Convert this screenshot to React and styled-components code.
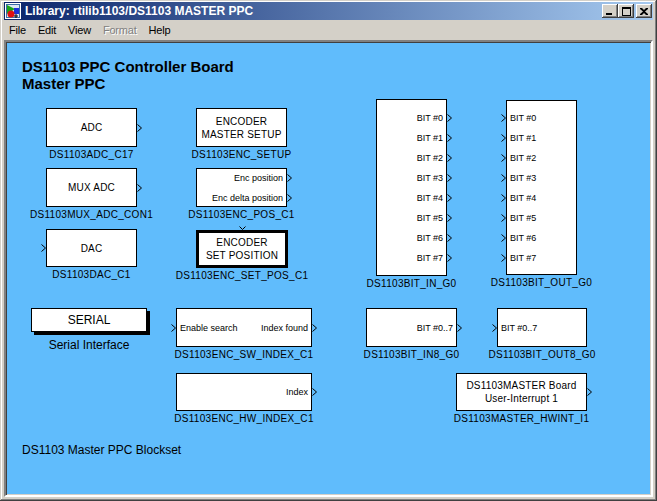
import React from 'react';
import styled, { createGlobalStyle } from 'styled-components';

const GlobalStyle = createGlobalStyle`
  html, body {
    margin: 0;
    padding: 0;
    background: #d4d0c8;
  }
  * {
    box-sizing: border-box;
  }
`;

// page coords of the canvas content origin
const ORIGIN_X = 6;
const ORIGIN_Y = 42;

const bitRows = (side) =>
  Array.from({ length: 8 }, (_, i) =>
    side === 'out'
      ? { right: `BIT #${i}`, out: true }
      : { left: `BIT #${i}`, in: true }
  );

const blocks = [
  { id: 'adc', x: 46, y: 108, w: 91, h: 39, label: 'DS1103ADC_C17', rows: [{ caption: ['ADC'], out: true }] },
  { id: 'mux', x: 46, y: 168, w: 91, h: 39, label: 'DS1103MUX_ADC_CON1', rows: [{ caption: ['MUX ADC'], out: true }] },
  { id: 'dac', x: 46, y: 229, w: 91, h: 38, label: 'DS1103DAC_C1', rows: [{ caption: ['DAC'], in: true }] },
  { id: 'setup', x: 196, y: 108, w: 91, h: 39, label: 'DS1103ENC_SETUP', rows: [{ caption: ['ENCODER', 'MASTER SETUP'] }] },
  {
    id: 'pos', x: 196, y: 168, w: 91, h: 39, label: 'DS1103ENC_POS_C1',
    rows: [{ right: 'Enc position', out: true }, { right: 'Enc delta position', out: true }],
  },
  {
    id: 'setpos', x: 196, y: 230, w: 92, h: 38, thick: true, topIn: true, label: 'DS1103ENC_SET_POS_C1',
    rows: [{ caption: ['ENCODER', 'SET POSITION'] }],
  },
  { id: 'bitin', x: 376, y: 99, w: 71, h: 177, label: 'DS1103BIT_IN_G0', rows: bitRows('out') },
  { id: 'bitout', x: 506, y: 100, w: 71, h: 175, label: 'DS1103BIT_OUT_G0', rows: bitRows('in') },
  {
    id: 'serial', x: 31, y: 308, w: 116, h: 24, shadow: true, big: true, label: 'Serial Interface',
    rows: [{ caption: ['SERIAL'] }],
  },
  {
    id: 'swindex', x: 176, y: 308, w: 136, h: 39, label: 'DS1103ENC_SW_INDEX_C1',
    rows: [{ left: 'Enable search', right: 'Index found', in: true, out: true }],
  },
  { id: 'hwindex', x: 176, y: 373, w: 136, h: 38, label: 'DS1103ENC_HW_INDEX_C1', rows: [{ right: 'Index', out: true }] },
  { id: 'bitin8', x: 366, y: 308, w: 91, h: 39, label: 'DS1103BIT_IN8_G0', rows: [{ right: 'BIT #0..7', out: true }] },
  { id: 'bitout8', x: 497, y: 308, w: 90, h: 39, label: 'DS1103BIT_OUT8_G0', rows: [{ left: 'BIT #0..7', in: true }] },
  {
    id: 'hwint', x: 456, y: 373, w: 131, h: 38, label: 'DS1103MASTER_HWINT_I1',
    rows: [{ caption: ['DS1103MASTER Board', 'User-Interrupt 1'], out: true }],
  },
];

const menus = [
  { name: 'File' },
  { name: 'Edit' },
  { name: 'View' },
  { name: 'Format', disabled: true },
  { name: 'Help' },
];

function App() {
  return (
    <>
      <GlobalStyle />
      <Window>
        <TitleBar>
          <AppIcon />
          <TitleText>Library: rtilib1103/DS1103 MASTER PPC</TitleText>
          <TitleButtons>
            <CaptionButton>
              <svg width="8" height="7" viewBox="0 0 8 7"><rect x="0" y="5" width="6" height="2" fill="#000" /></svg>
            </CaptionButton>
            <CaptionButton>
              <svg width="9" height="9" viewBox="0 0 9 9">
                <rect x="0.5" y="0.5" width="8" height="8" fill="none" stroke="#000" />
                <rect x="0" y="1" width="9" height="1" fill="#000" />
              </svg>
            </CaptionButton>
            <CaptionButton $gap>
              <svg width="8" height="7" viewBox="0 0 8 7">
                <path d="M0 0h2l2 2 2-2h2v1L5 3.5 8 6v1H6L4 5 2 7H0V6l3-2.5L0 1z" fill="#000" />
              </svg>
            </CaptionButton>
          </TitleButtons>
        </TitleBar>

        <MenuBar>
          {menus.map((m) => (
            <MenuItem key={m.name} $disabled={m.disabled}>{m.name}</MenuItem>
          ))}
        </MenuBar>

        <Canvas>
          <Annotation $x={22} $y={58} $bold>
            DS1103 PPC Controller Board
            <br />
            Master PPC
          </Annotation>

          {blocks.map((b) => (
            <Block key={b.id} {...b} />
          ))}

          <Annotation $x={22} $y={443}>DS1103 Master PPC Blockset</Annotation>
        </Canvas>
      </Window>
    </>
  );
}

function AppIcon() {
  return (
    <svg width="16" height="16" viewBox="0 0 16 16">
      <rect x="0.5" y="0.5" width="15" height="15" fill="#e8f0f8" stroke="#ffffff" />
      <rect x="1" y="1" width="14" height="14" fill="#3a6ea5" />
      <rect x="2" y="2" width="12" height="12" fill="#dce8f4" />
      <polygon points="2,2 10,6 2,11" fill="#19a319" />
      <rect x="9" y="5" width="5" height="6" fill="#1a30d8" />
      <circle cx="6" cy="11" r="3.5" fill="#e01010" />
      <path d="M11 11v4M9 13h4" stroke="#000" strokeWidth="1" />
    </svg>
  );
}

function PortMark({ side }) {
  return (
    <Chevron $side={side} width="5" height="8" viewBox="0 0 5 8">
      <polyline points="0.5,0.5 4.5,4 0.5,7.5" fill="none" stroke="#000" strokeWidth="1" />
    </Chevron>
  );
}

function Block({ x, y, w, h, label, rows, thick, shadow, topIn, big }) {
  return (
    <Node $x={x} $y={y} $w={w}>
      <Box $h={h} $thick={thick} $shadow={shadow}>
        {topIn && (
          <TopPort width="7" height="4" viewBox="0 0 7 4">
            <polyline points="0.5,0.5 3.5,3.5 6.5,0.5" fill="none" stroke="#000" />
          </TopPort>
        )}
        {rows.map((r, i) => (
          <Row key={i} $align={r.caption ? 'center' : r.left && r.right ? 'space-between' : r.left ? 'flex-start' : 'flex-end'}>
            {r.in && <PortMark side="in" />}
            {r.caption && (
              <Caption $big={big}>
                {r.caption.map((line, j) => <div key={j}>{line}</div>)}
              </Caption>
            )}
            {r.left && <PortText>{r.left}</PortText>}
            {r.right && <PortText>{r.right}</PortText>}
            {r.out && <PortMark side="out" />}
          </Row>
        ))}
      </Box>
      <BlockName $big={big}>{label}</BlockName>
    </Node>
  );
}

export default App;

const Window = styled.div`
  width: 657px;
  height: 501px;
  display: flex;
  flex-direction: column;
  padding: 2px 4px 4px 4px;
  background: #d4d0c8;
  box-shadow: inset -1px -1px #404040, inset 1px 1px #d4d0c8, inset -2px -2px #808080, inset 2px 2px #ffffff;
  font-family: 'Liberation Sans', Arial, sans-serif;
  overflow: hidden;
`;

const TitleBar = styled.div`
  height: 18px;
  display: flex;
  align-items: center;
  padding: 0 1px 0 1px;
  background: linear-gradient(to right, #0a246a, #a6caf0);
  flex-shrink: 0;
`;

const TitleText = styled.span`
  margin-left: 4px;
  color: #ffffff;
  font-weight: bold;
  font-size: 12px;
  white-space: nowrap;
`;

const TitleButtons = styled.div`
  margin-left: auto;
  display: flex;
  align-items: center;
`;

const CaptionButton = styled.div`
  width: 16px;
  height: 14px;
  margin-left: ${(p) => (p.$gap ? '2px' : '0')};
  display: flex;
  align-items: center;
  justify-content: center;
  background: #d4d0c8;
  box-shadow: inset -1px -1px #404040, inset 1px 1px #ffffff, inset -2px -2px #808080;
`;

const MenuBar = styled.div`
  height: 20px;
  display: flex;
  align-items: center;
  margin-left: -1px;
  flex-shrink: 0;
`;

const MenuItem = styled.span`
  padding: 0 6px;
  font-size: 11px;
  letter-spacing: -0.2px;
  color: ${(p) => (p.$disabled ? '#808080' : '#000000')};
  text-shadow: ${(p) => (p.$disabled ? '1px 1px #ffffff' : 'none')};
`;

const Canvas = styled.div`
  position: relative;
  flex: 1;
  background: #60bcfc;
  border-style: solid;
  border-width: 2px;
  border-color: #808080 #ffffff #ffffff #808080;
  box-shadow: inset 1px 1px #404040, inset -1px -1px #d4d0c8;
`;

const Annotation = styled.div`
  position: absolute;
  left: ${(p) => p.$x - ORIGIN_X}px;
  top: ${(p) => p.$y - ORIGIN_Y}px;
  font-size: ${(p) => (p.$bold ? '15px' : '12px')};
  line-height: ${(p) => (p.$bold ? '17px' : '14px')};
  font-weight: ${(p) => (p.$bold ? 'bold' : 'normal')};
  color: #000;
  white-space: nowrap;
`;

const Node = styled.div`
  position: absolute;
  left: ${(p) => p.$x - ORIGIN_X}px;
  top: ${(p) => p.$y - ORIGIN_Y}px;
  width: ${(p) => p.$w}px;
  display: flex;
  flex-direction: column;
  align-items: center;
`;

const Box = styled.div`
  position: relative;
  width: 100%;
  height: ${(p) => p.$h}px;
  display: flex;
  flex-direction: column;
  justify-content: center;
  background: #ffffff;
  border: ${(p) => (p.$thick ? '3px' : '1px')} solid #000;
  box-shadow: ${(p) => (p.$shadow ? '3px 3px 0 #000' : 'none')};
`;

const Row = styled.div`
  position: relative;
  flex-shrink: 0;
  min-height: 20px;
  display: flex;
  align-items: center;
  justify-content: ${(p) => p.$align};
  padding: 0 3px;
`;

const Caption = styled.div`
  font-size: ${(p) => (p.$big ? '12px' : '10px')};
  line-height: 13px;
  letter-spacing: ${(p) => (p.$big ? '0' : '0.2px')};
  text-align: center;
  white-space: nowrap;
  color: #000;
`;

const PortText = styled.span`
  font-size: 9px;
  white-space: nowrap;
  color: #000;
`;

const Chevron = styled.svg`
  position: absolute;
  top: 50%;
  margin-top: -4px;
  ${(p) => (p.$side === 'in' ? 'left: -6px;' : 'right: -6px;')}
`;

const TopPort = styled.svg`
  position: absolute;
  top: -7px;
  left: 50%;
  margin-left: -3px;
`;

const BlockName = styled.div`
  margin-top: ${(p) => (p.$big ? '6px' : '2px')};
  font-size: ${(p) => (p.$big ? '12px' : '10px')};
  line-height: ${(p) => (p.$big ? '14px' : '12px')};
  letter-spacing: ${(p) => (p.$big ? '0' : '0.3px')};
  white-space: nowrap;
  color: #000;
`;
